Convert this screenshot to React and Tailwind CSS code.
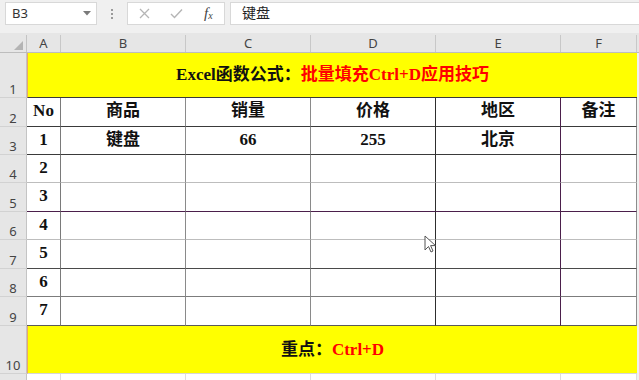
import React from "react";

const serif = "font-['Liberation_Serif','Noto_Sans_CJK_SC',serif]";
const ui = "font-['Noto_Sans','Liberation_Sans',sans-serif]";

const cols = [
  { letter: "A", cls: "w-[34px] border-r-[#7a7a7a]", head: "w-[34px]" },
  { letter: "B", cls: "w-[125px] border-r-[#8a8a8a]", head: "w-[125px]" },
  { letter: "C", cls: "w-[125px] border-r-[#8a8a8a]", head: "w-[125px]" },
  { letter: "D", cls: "w-[125px] border-r-[#2e2e2e]", head: "w-[125px]" },
  { letter: "E", cls: "w-[125px] border-r-[#4b1f4b]", head: "w-[125px]" },
  { letter: "F", cls: "w-[76px] border-r-[#8c8c8c]", head: "w-[76px]" },
];

const rows = [
  { n: 2, h: "h-[29px]", line: "border-b-[#3a3a3a]", cells: ["No", "商品", "销量", "价格", "地区", "备注"] },
  { n: 3, h: "h-[28px]", line: "border-b-[#3a3a3a]", cells: ["1", "键盘", "66", "255", "北京", ""] },
  { n: 4, h: "h-[28px]", line: "border-b-[#bdbdbd]", cells: ["2"] },
  { n: 5, h: "h-[29px]", line: "border-b-[#4b1f4b]", cells: ["3"] },
  { n: 6, h: "h-[28px]", line: "border-b-[#bdbdbd]", cells: ["4"] },
  { n: 7, h: "h-[29px]", line: "border-b-[#4a4a4a]", cells: ["5"] },
  { n: 8, h: "h-[28px]", line: "border-b-[#7c7c7c]", cells: ["6"] },
  { n: 9, h: "h-[29px]", line: "border-b-[#5a5a5a]", cells: ["7"] },
];

function RowHead({ n, h }) {
  return (
    <div className={`${h} w-[27px] shrink-0 bg-[#e6e6e6] border-r border-b border-r-[#c4c4c4] border-b-[#d2d2d2] flex items-end justify-center pb-[1px] text-[13px] leading-none text-[#444] ${ui}`}>
      {n}
    </div>
  );
}

function Filler({ h }) {
  return <div className={`${h} flex-1 bg-[#f1f1f1]`} />;
}

export default function App() {
  return (
    <div className="relative w-[639px] h-[380px] overflow-hidden bg-[#f0f0f0]">
      {/* formula bar */}
      <div className="h-[33px] flex items-start pt-[2px] pl-[5px]">
        <div className={`w-[92px] h-[23px] bg-white border border-[#d8d8d8] flex items-center justify-between pl-[6px] pr-[5px] text-[13px] text-[#333] ${ui}`}>
          <span>B3</span>
          <svg width="8" height="5" viewBox="0 0 8 5">
            <polygon points="0,0 8,0 4,4.5" fill="#7a7a7a" />
          </svg>
        </div>
        <div className="w-[30px] h-[23px] flex flex-col items-center justify-center gap-[2px]">
          <span className="w-[2px] h-[2px] bg-[#9a9a9a]" />
          <span className="w-[2px] h-[2px] bg-[#9a9a9a]" />
          <span className="w-[2px] h-[2px] bg-[#9a9a9a]" />
        </div>
        <div className="w-[98px] h-[23px] bg-white border border-[#d8d8d8] flex items-center">
          <div className="w-[33px] flex justify-center">
            <svg width="11" height="11" viewBox="0 0 11 11">
              <path d="M1 1 L10 10 M10 1 L1 10" stroke="#b5b5b5" strokeWidth="1.3" />
            </svg>
          </div>
          <div className="w-[33px] flex justify-center">
            <svg width="13" height="11" viewBox="0 0 13 11">
              <path d="M1 6 L4.5 9.5 L12 1.5" stroke="#b5b5b5" strokeWidth="1.4" fill="none" />
            </svg>
          </div>
          <div className={`w-[32px] flex justify-center italic text-[15px] leading-none text-[#444] ${serif}`}>
            <span>f</span>
            <span className="text-[10px] self-end">x</span>
          </div>
        </div>
        <div className={`ml-[5px] flex-1 h-[23px] bg-white border border-[#d8d8d8] border-r-0 flex items-center pl-[11px] text-[14px] text-[#222] ${serif}`}>
          键盘
        </div>
      </div>

      {/* column header */}
      <div className={`flex h-[20px] bg-[#e6e6e6] border-b border-[#bdbdbd] text-[13px] text-[#444] ${ui}`}>
        <div className="w-[27px] shrink-0 border-r border-[#c4c4c4] flex items-end justify-end pr-[3px] pb-[2px] mt-[2px]">
          <svg width="9" height="9" viewBox="0 0 9 9">
            <polygon points="9,0 9,9 0,9" fill="#b4b4b4" />
          </svg>
        </div>
        {cols.map((c) => (
          <div key={c.letter} className={`${c.head} shrink-0 border-r border-[#c8c8c8] flex items-center justify-center mt-[2px]`}>
            {c.letter}
          </div>
        ))}
        <div className="flex-1" />
      </div>

      {/* row 1 title */}
      <div className="flex">
        <RowHead n={1} h="h-[45px]" />
        <div className={`h-[45px] w-[610px] shrink-0 bg-[#ffff00] border-b border-[#3a3a3a] border-l border-l-[#e8a868] flex items-center justify-center font-bold text-[17px] ${serif}`}>
          <span className="text-[#111]">Excel函数公式：</span>
          <span className="text-[#ff0000]">批量填充Ctrl+D应用技巧</span>
        </div>
        <Filler h="h-[45px]" />
      </div>

      {/* table rows */}
      {rows.map((r) => (
        <div key={r.n} className="flex">
          <RowHead n={r.n} h={r.h} />
          {cols.map((c, i) => (
            <div
              key={c.letter}
              className={`${r.h} ${c.cls} ${r.line} shrink-0 bg-white border-r border-b flex items-center justify-center pb-[2px] font-bold text-[17px] text-[#111] ${serif}`}
            >
              {r.cells[i] || ""}
            </div>
          ))}
          <Filler h={r.h} />
        </div>
      ))}

      {/* row 10 */}
      <div className="flex">
        <RowHead n={10} h="h-[48px]" />
        <div className={`h-[48px] w-[610px] shrink-0 bg-[#ffff00] border-b border-[#d6d6d6] border-l border-l-[#e8a868] flex items-center justify-center font-bold text-[17px] ${serif}`}>
          <span className="text-[#111]">重点：</span>
          <span className="text-[#ff0000]">Ctrl+D</span>
        </div>
        <Filler h="h-[48px]" />
      </div>

      {/* row 11 */}
      <div className="flex">
        <RowHead n={11} h="h-[20px]" />
        {cols.map((c) => (
          <div key={c.letter} className={`h-[20px] ${c.head} shrink-0 bg-white border-r border-[#dedede]`} />
        ))}
        <Filler h="h-[20px]" />
      </div>

      {/* mouse pointer */}
      <svg className="absolute left-[424px] top-[235px]" width="13" height="19" viewBox="0 0 13 19">
        <path d="M1 1 L1 15 L4.5 11.5 L7 17 L9 16 L6.6 10.6 L11.5 10.6 Z" fill="#ffffff" stroke="#555" strokeWidth="1" strokeLinejoin="round" />
      </svg>
    </div>
  );
}
